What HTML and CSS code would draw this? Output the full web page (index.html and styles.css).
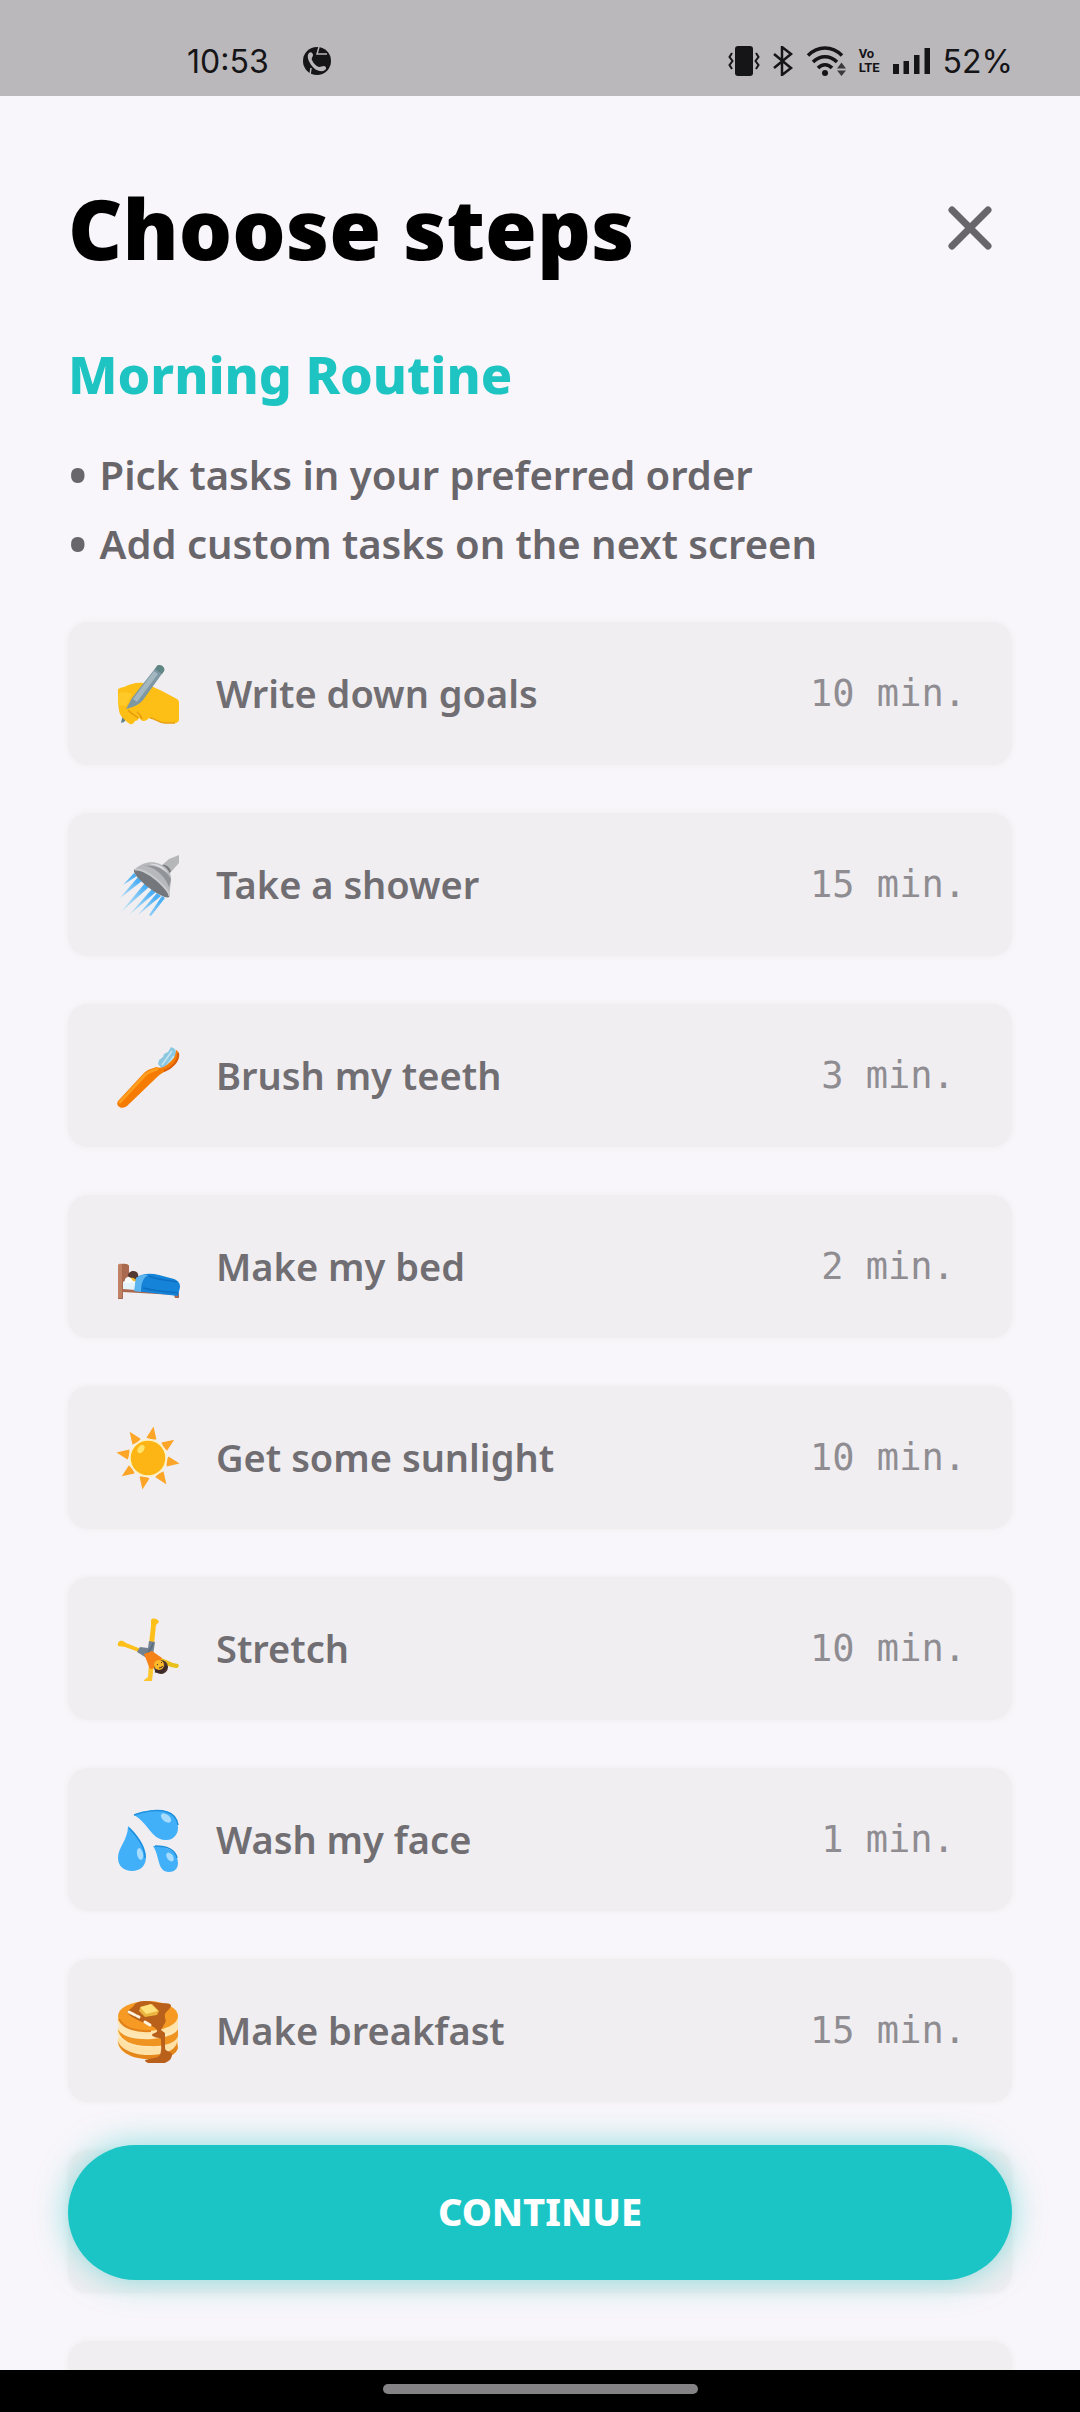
FILE: index.html
```html
<!DOCTYPE html>
<html lang="en">
<head>
    <meta charset="UTF-8">
    <meta name="viewport" content="width=device-width, initial-scale=1.0">
    <title>Choose steps</title>
    <link rel="stylesheet" href="styles.css">
</head>
<body>
    <div class="status-bar">
        <div class="status-left">
            <span>10:53</span>
            <svg width="28" height="28" viewBox="0 0 28 28">
                <circle cx="14" cy="14" r="14" fill="#151417"/>
                <path d="M6 6c2-2 4 0 4 2s-2 3-1 5c1 3 4 6 7 7 2 0 3-1 5-1s3 3 1 4c-4 3-10 0-13-4S3 9 6 6z" fill="#bab8bb"/>
                <path d="M16 0l-2 7h10M8 21l-1 7" fill="none" stroke="#bab8bb" stroke-width="1.500"/>
            </svg>
        </div>
        <div class="status-right">
            <svg width="32" height="30" viewBox="0 0 32 30">
                <rect x="7" y="0" width="18" height="30" rx="3" fill="#151417"/>
                <path d="M4 7L1.500 11l3 4-3 4L4 23M28 7l2.500 4-3 4 3 4-2.500 4" fill="none" stroke="#151417" stroke-width="2"/>
            </svg>
            <svg width="20" height="30" viewBox="0 0 20 30">
                <path d="M1 8l17 14-9 7V1l9 7L1 22" fill="none" stroke="#151417" stroke-width="2.500"/>
            </svg>
            <svg width="40" height="30" viewBox="0 0 40 30">
                <path d="M2 9.500C12-.5 26-.5 36 9.500M7 16c7-7 17-7 24 0M12 22c4-4.500 10-4.500 14 0" fill="none" stroke="#151417" stroke-width="3.500"/>
                <circle cx="19" cy="27" r="3" fill="#151417"/>
                <path d="M31 22.500l4.500-6 4.500 6zM31 24.500h9l-4.500 5.500z" fill="#3a393c"/>
            </svg>
            <span class="volte"><span>Vo</span><span>LTE</span></span>
            <svg width="37" height="26" viewBox="0 0 37 26">
                <path d="M0 16h6v10H0zM10.500 13h5.500v13h-5.500zM21 7h5.500v19H21zM31.500 0H37v26h-5.500z" fill="#151417"/>
            </svg>
            <span>52%</span>
        </div>
    </div>

    <main class="screen">
        <header class="header">
            <h1>Choose steps</h1>
            <button class="close" aria-label="Close">
                <svg width="44" height="44" viewBox="0 0 44 44">
                    <path d="M4 4l36 36M40 4L4 40" stroke="#68666a" stroke-width="7" stroke-linecap="round"/>
                </svg>
            </button>
        </header>
        <h2>Morning Routine</h2>
        <ul class="hints">
            <li>Pick tasks in your preferred order</li>
            <li>Add custom tasks on the next screen</li>
        </ul>

        <div class="steps">
            <button class="step">
                <svg class="emoji" viewBox="0 0 64 64">
                    <path d="M5 61l2-9 6 2-5 6z" fill="#5f7f8c"/>
                    <path d="M2 28c0-2 3-2 6-3 6-3 13-5 19-4 6 1 12 5 19 8l15 8c2 1 2 3 2 5v15c0 3-2 4-4 4H49c-6 0-9-5-15-5-2 0-3 3-6 3s-3-2-5-3c-1 2-2 3-4 3-1 2-3 4-5 3-3-2-8-6-10-10-2-5-2-18-2-24z" fill="#fdbf16"/>
                    <path d="M12 48c4 5 8 5 10 8M21 50c3 2 4 4 5 7" fill="none" stroke="#e79a0c" stroke-width="1.500"/>
                    <path d="M34 56c5 0 8 5 15 5h10" fill="none" stroke="#e9a00f" stroke-width="1.500"/>
                    <path d="M10 47l6-11L41 4c2-3 9 1 7 5L27 38c-4 5-10 7-17 9z" fill="#7d97a3"/>
                    <path d="M17 37L38 9l4 3-21 28z" fill="#a3b7c0"/>
                    <path d="M39 7l2-3c2-3 9 1 7 5l-2 3z" fill="#5f8584"/>
                    <path d="M3 31c4-1 8-1 13 1l-6 12c-2 0-5-1-8-1z" fill="#ffc928"/>
                </svg>
                <span class="name">Write down goals</span>
                <span class="time">10 min.</span>
            </button>
            <button class="step">
                <svg class="emoji" viewBox="0 0 64 64">
                    <defs>
                        <linearGradient id="water" x1="1" y1="0" x2="0" y2="1">
                            <stop offset="0.400" stop-color="#4db0f5"/>
                            <stop offset="1" stop-color="#a5dcf8" stop-opacity="0.400"/>
                        </linearGradient>
                    </defs>
                    <path d="M18 20l3 3-14 9zM22 24l4 4-22 17zM29 30l4 4L5 59zM36 36l4 3-27 23zM41 40l4 3-23 19zM46 43l3 2-14 18-2-1z" fill="url(#water)"/>
                    <path d="M44 14l9-8 10-4v8l-9 10z" fill="#b5b7b9"/>
                    <path d="M43 14c3-4 9-3 12 4l-3 5z" fill="#77797c"/>
                    <path d="M19 16c7-6 16-9 25-5 7 3 12 9 11 17l-2 16z" fill="#b6b8bb"/>
                    <path d="M28 13c9 0 20 8 25 21l2-8c-4-8-14-15-27-13z" fill="#909397"/>
                    <path d="M33 11c7-1 15 2 19 9-6-5-12-8-19-9z" fill="#dddee0"/>
                    <path d="M18 17c2-3 13 1 23 10s14 15 12 17-12-3-21-10-15-14-14-17z" fill="#74777b"/>
                    <path d="M19 17c3-2 13 2 22 10s13 14 12 16" fill="none" stroke="#c8cacc" stroke-width="2"/>
                </svg>
                <span class="name">Take a shower</span>
                <span class="time">15 min.</span>
            </button>
            <button class="step">
                <svg class="emoji" viewBox="0 0 64 64">
                    <path d="M42 20l1-4 4-3 1-3 4-2 3-5 4 2 2 6-2 6-12 9z" fill="#8cc7e0"/>
                    <path d="M46 21l10-14M50 23l8-11" stroke="#c5e6f2" stroke-width="1.500"/>
                    <path d="M2 57l26-28c4-4 8-4 12-6 5 2 9 0 13-4 4-3 7-7 7-13 4 2 4 6 2 10-3 6-8 9-14 12-4 2-7 5-11 9L11 62c-5 4-12 0-9-5z" fill="#f57c00"/>
                    <path d="M4 58l25-27c4-4 8-4 12-6" fill="none" stroke="#ff9d1e" stroke-width="3" stroke-linecap="round"/>
                    <path d="M62 9c1 8-6 15-14 18" fill="none" stroke="#d95d0b" stroke-width="2"/>
                </svg>
                <span class="name">Brush my teeth</span>
                <span class="time">3 min.</span>
            </button>
            <button class="step">
                <svg class="emoji" viewBox="0 0 64 64">
                    <path d="M6 47l12-2 8 3v11L6 56z" fill="#e5f4fc"/>
                    <path d="M2 31c0-3 11-3 11 0v11l-6 5v7l50 4h6v5h-4l-1-3-51-3v7H2z" fill="#a9694f"/>
                    <path d="M2 31c0-3 3-2 4-2v34H2z" fill="#bf8063"/>
                    <path d="M9 44c3-3 6-3 10-1l3 4-13 1z" fill="#f8fbfe"/>
                    <path d="M14 42l7 1 1 4-5-1z" fill="#f6b82d"/>
                    <path d="M12 41c0-5 8-7 10-2 1 3-1 6-3 5-2-2-4 0-7-3z" fill="#543930"/>
                    <path d="M20 43c6-5 15-5 23-3l15 4c5 2 6 5 6 8l-2 9-43-5z" fill="#1583d8"/>
                    <path d="M20 43c4-3 8-4 12-3-6 4-7 10-7 17l-7-1z" fill="#5db5ef"/>
                    <path d="M33 41c8 4 18 4 28 6M27 53c12 3 24 4 35 5" fill="none" stroke="#0c6fc2" stroke-width="1.500"/>
                </svg>
                <span class="name">Make my bed</span>
                <span class="time">2 min.</span>
            </button>
            <button class="step">
                <svg class="emoji" viewBox="0 0 64 64">
                    <defs>
                        <path id="ray" d="M32 0l-5 12c1 1 9 1 10 0z"/>
                    </defs>
                    <g fill="#fca527" transform="rotate(10 32 32)">
                        <use href="#ray"/>
                        <use href="#ray" transform="rotate(45 32 32)"/>
                        <use href="#ray" transform="rotate(90 32 32)"/>
                        <use href="#ray" transform="rotate(135 32 32)"/>
                        <use href="#ray" transform="rotate(180 32 32)"/>
                        <use href="#ray" transform="rotate(225 32 32)"/>
                        <use href="#ray" transform="rotate(270 32 32)"/>
                        <use href="#ray" transform="rotate(315 32 32)"/>
                    </g>
                    <circle cx="32" cy="32" r="18" fill="#fdb515" stroke="#fff1c0" stroke-width="1.500"/>
                    <ellipse cx="25" cy="23" rx="3" ry="4.500" fill="#ffe16b" transform="rotate(35 25 23)"/>
                </svg>
                <span class="name">Get some sunlight</span>
                <span class="time">10 min.</span>
            </button>
            <button class="step">
                <svg class="emoji" viewBox="0 0 64 64">
                    <path d="M33 27l2-18 0-6c2-3 7-1 8 2l-3 3-2 19zM23 35L9 30l-7-1c-1-4 2-6 5-5l3 2 15 6z" fill="#fdbf1a"/>
                    <path d="M43 40l14 6 5 1c2 2 0 4-2 4l-5-1-14-5z" fill="#e9bf1b"/>
                    <path d="M33 45l-1 15-4 3v1h8l2-18z" fill="#fdc52c"/>
                    <path d="M33 24l6 1-2 13-8 2-8-5 3-5 8 1z" fill="#728291"/>
                    <path d="M37 26c-1 6-4 8-7 12" fill="none" stroke="#57697a" stroke-width="1.500"/>
                    <path d="M28 37l8-3 10 7-6 10-6 1z" fill="#f68116"/>
                    <circle cx="45" cy="50" r="7" fill="#503630"/>
                    <circle cx="43" cy="48" r="5" fill="#fbb92a"/>
                    <path d="M41 47l1 1M45 45l1 1M43 51c2 0 3-1 4-2" stroke="#503630" stroke-width="1"/>
                    <path d="M39 54l7 1 5-6" fill="none" stroke="#3d2a26" stroke-width="3"/>
                </svg>
                <span class="name">Stretch</span>
                <span class="time">10 min.</span>
            </button>
            <button class="step">
                <svg class="emoji" viewBox="0 0 64 64">
                    <g fill="#42b0f9">
                        <path d="M18 7c9-5 27-6 35-3 7 3 9 10 9 16 0 7-6 13-13 12-14-1-16-16-31-25z"/>
                        <path d="M12 18c9 8 18 20 18 31 0 9-6 14-14 14S2 58 2 50c0-11 10-18 10-32z"/>
                        <path d="M37 38c13 0 25 5 25 17 0 6-4 9-9 9-12 0-9-16-16-26z"/>
                    </g>
                    <g fill="none" stroke="#1d8fdd" stroke-width="1.500">
                        <path d="M18 7c10-4 24-6 33-3 7 2 10 7 11 13"/>
                        <path d="M13 20c8 8 16 18 16 30"/>
                        <path d="M39 38c10 0 20 3 22 12"/>
                    </g>
                    <g fill="#a6dcff">
                        <ellipse cx="50" cy="10" rx="6" ry="3.500" transform="rotate(40 50 10)"/>
                        <ellipse cx="24" cy="46" rx="3" ry="6" transform="rotate(-12 24 46)"/>
                        <ellipse cx="54" cy="49" rx="3" ry="5" transform="rotate(-35 54 49)"/>
                    </g>
                </svg>
                <span class="name">Wash my face</span>
                <span class="time">1 min.</span>
            </button>
            <button class="step">
                <svg class="emoji" viewBox="0 0 64 64">
                    <path d="M2 39c-1 4 0 10 4 13 8 7 22 9 36 8 13-1 19-6 20-12V38z" fill="#ffe0a5"/>
                    <path d="M2 42c2 8 16 15 34 14 16-1 24-6 25-13l1 6c-2 8-14 12-30 11C14 60 2 51 2 42z" fill="#e5861a"/>
                    <path d="M2 28c-1 4-1 9 2 12 8 7 22 9 36 8 13-1 22-6 22-12V26z" fill="#ffe7b5"/>
                    <path d="M2 30c4 8 18 11 34 10 14-1 24-5 26-10v7c-2 7-14 11-30 10C14 47 3 40 2 30z" fill="#ef9421"/>
                    <path d="M2 17c-1 4-1 8 2 11 8 7 22 9 36 8 13-1 22-6 22-12v-9z" fill="#ffe4ab"/>
                    <ellipse cx="32" cy="17" rx="30" ry="15" fill="#f69a23"/>
                    <path d="M3 20c4 9 17 13 32 12" fill="none" stroke="#e2811a" stroke-width="2"/>
                    <path d="M11 13c2-3 6-4 8-8 6-4 13-3 19-2 7 2 14 0 17 3 0 4-5 6-6 9-1 4 2 6 0 9l-4 7 4 3v15c0 4 7 3 7 7-1 7-8 9-15 9-6 0-12-1-12-4 5-2 12-1 15-5 2-5 1-11 1-16-2-2-8-1-9-4 0-2 6-2 5-5-3-4-10-6-15-8-4-2-13-6-15-10z" fill="#b9601a"/>
                    <path d="M24 9l12-4 7 7-2 4-12 2-6-6z" fill="#e9b53f"/>
                    <path d="M24 8l11-3 7 7-12 3z" fill="#ffe07a"/>
                    <path d="M13 13l6 3M21 17l2 1M29 23l5 3" stroke="#fff4dd" stroke-width="3" stroke-linecap="round"/>
                </svg>
                <span class="name">Make breakfast</span>
                <span class="time">15 min.</span>
            </button>
            <div class="step"></div>
            <div class="step"></div>
        </div>

        <button class="continue">CONTINUE</button>
    </main>

    <div class="nav-bar"><div class="nav-handle"></div></div>
</body>
</html>
```

FILE: styles.css
```css
* {
    box-sizing: border-box;
}
body {
    margin: 0;
    height: 100vh;
    display: flex;
    flex-direction: column;
    overflow: hidden;
    background-color: #f8f6fa;
    color: #68666a;
    font-family: "Noto Sans", sans-serif;
}
button {
    border: none;
    padding: 0;
    background: none;
    font-family: inherit;
    color: inherit;
    cursor: pointer;
}
svg {
    display: block;
    flex-shrink: 0;
}
h1, h2, ul {
    margin: 0;
}

.status-bar {
    flex-shrink: 0;
    display: flex;
    justify-content: space-between;
    height: 96px;
    padding: 26px 67px 0 187px;
    background-color: #bab8bb;
    color: #151417;
    font-family: Inter, Roboto, sans-serif;
    font-size: 32px;
}
.status-left, .status-right {
    display: flex;
    align-items: center;
}
.status-left {
    gap: 34px;
}
.status-right {
    gap: 13px;
}
.volte {
    display: flex;
    flex-direction: column;
    font-family: Roboto, sans-serif;
    font-size: 13px;
    font-weight: bold;
    line-height: 14px;
}

.screen {
    position: relative;
    flex: 1;
    min-height: 0;
    padding: 84px 68px 0;
    overflow: hidden;
}
.header {
    display: flex;
    justify-content: space-between;
    align-items: center;
    padding-right: 20px;
}
h1 {
    color: #000;
    font-size: 84px;
    font-weight: 900;
    line-height: 96px;
}
h2 {
    margin-top: 66px;
    color: #1dc4c2;
    font-size: 52px;
    font-weight: 800;
    line-height: 64px;
}
.hints {
    margin: 34px 0 44px;
    padding: 0;
    list-style: none;
    font-size: 40px;
    font-weight: 600;
    line-height: 69px;
}
.hints li {
    display: flex;
    gap: 12px;
}
.hints li::before {
    content: "•";
    font-size: 52px;
}

.steps {
    display: flex;
    flex-direction: column;
    gap: 48px;
}
.step {
    display: flex;
    align-items: center;
    width: 100%;
    height: 143px;
    flex-shrink: 0;
    padding: 0 46px 0 48px;
    border-radius: 20px;
    background-color: #f0eef1;
    box-shadow: 0 0 6px #efedf0;
    text-align: left;
}
.emoji {
    width: 64px;
    height: 64px;
}
.name {
    flex: 1;
    margin-left: 36px;
    padding-bottom: 2px;
    color: #706e72;
    font-size: 38px;
    font-weight: 600;
}
.time {
    width: 156px;
    color: #8f8d91;
    font-family: "DejaVu Sans Mono", monospace;
    font-size: 37px;
    text-align: center;
}

.continue {
    position: absolute;
    right: 68px;
    bottom: 90px;
    left: 68px;
    height: 135px;
    padding-bottom: 4px;
    border-radius: 68px;
    background-color: #1cc5c5;
    box-shadow: 0 0 32px rgba(28, 197, 197, 0.5);
    color: #fff;
    font-size: 38px;
    font-weight: 800;
}

.nav-bar {
    flex-shrink: 0;
    display: flex;
    justify-content: center;
    height: 42px;
    padding-top: 14px;
    background-color: #000;
}
.nav-handle {
    width: 315px;
    height: 10px;
    border-radius: 5px;
    background-color: #848285;
}
```
